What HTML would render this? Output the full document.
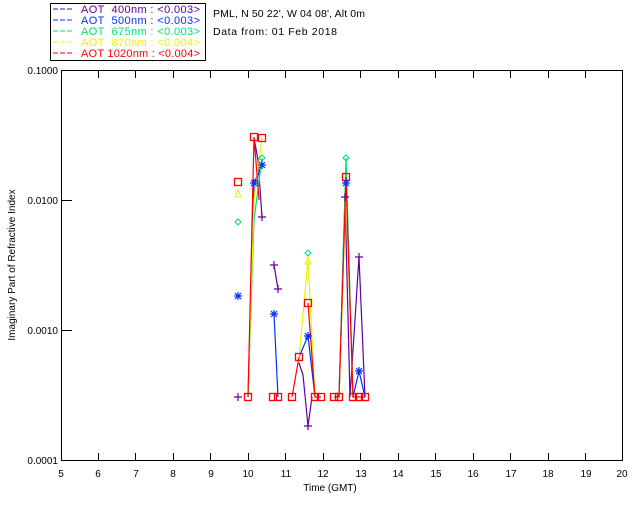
<!DOCTYPE html>
<html><head><style>
html,body{margin:0;padding:0;background:#fff;}
svg{display:block;font-family:"Liberation Sans",sans-serif;}
</style></head><body>
<svg width="640" height="512" viewBox="0 0 640 512" xmlns="http://www.w3.org/2000/svg">
<rect width="640" height="512" fill="#fff"/>
<rect x="50.5" y="3.5" width="155" height="57" fill="#fff" stroke="#000"/>
<g font-size="11">
<g stroke-width="1">
<line x1="53" y1="9" x2="73" y2="9" stroke="#6000a0" stroke-dasharray="5,2"/>
<line x1="53" y1="20" x2="73" y2="20" stroke="#0030ff" stroke-dasharray="5,2"/>
<line x1="53" y1="31" x2="73" y2="31" stroke="#00e070" stroke-dasharray="5,2"/>
<line x1="53" y1="42" x2="73" y2="42" stroke="#f0f000" stroke-dasharray="5,2"/>
<line x1="53" y1="53" x2="73" y2="53" stroke="#ff0000" stroke-dasharray="5,2"/>
</g>
<text x="81" y="13" fill="#6000a0" textLength="119" lengthAdjust="spacing" xml:space="preserve">AOT  400nm : &lt;0.003&gt;</text>
<text x="81" y="24" fill="#0030ff" textLength="119" lengthAdjust="spacing" xml:space="preserve">AOT  500nm : &lt;0.003&gt;</text>
<text x="81" y="35" fill="#00e070" textLength="119" lengthAdjust="spacing" xml:space="preserve">AOT  675nm : &lt;0.003&gt;</text>
<text x="81" y="46" fill="#f0f000" textLength="119" lengthAdjust="spacing" xml:space="preserve">AOT  870nm : &lt;0.004&gt;</text>
<text x="81" y="57" fill="#ff0000" textLength="119" lengthAdjust="spacing" xml:space="preserve">AOT 1020nm : &lt;0.004&gt;</text>
</g>
<g font-size="10.5">
<text x="213" y="17" fill="#000" textLength="152" lengthAdjust="spacing">PML, N 50 22', W 04 08', Alt 0m</text>
<text x="213" y="35" fill="#000" textLength="124" lengthAdjust="spacing">Data from: 01 Feb 2018</text>
</g>
<rect x="61.5" y="70.5" width="561" height="390" fill="none" stroke="#000"/>
<g stroke="#000">
<line x1="61" y1="200.5" x2="72" y2="200.5"/><line x1="61" y1="330.5" x2="72" y2="330.5"/>
<line x1="98.5" y1="71" x2="98.5" y2="78"/><line x1="98.5" y1="453" x2="98.5" y2="460"/>
<line x1="135.5" y1="71" x2="135.5" y2="78"/><line x1="135.5" y1="453" x2="135.5" y2="460"/>
<line x1="173.5" y1="71" x2="173.5" y2="78"/><line x1="173.5" y1="453" x2="173.5" y2="460"/>
<line x1="210.5" y1="71" x2="210.5" y2="78"/><line x1="210.5" y1="453" x2="210.5" y2="460"/>
<line x1="248.5" y1="71" x2="248.5" y2="78"/><line x1="248.5" y1="453" x2="248.5" y2="460"/>
<line x1="285.5" y1="71" x2="285.5" y2="78"/><line x1="285.5" y1="453" x2="285.5" y2="460"/>
<line x1="323.5" y1="71" x2="323.5" y2="78"/><line x1="323.5" y1="453" x2="323.5" y2="460"/>
<line x1="360.5" y1="71" x2="360.5" y2="78"/><line x1="360.5" y1="453" x2="360.5" y2="460"/>
<line x1="398.5" y1="71" x2="398.5" y2="78"/><line x1="398.5" y1="453" x2="398.5" y2="460"/>
<line x1="435.5" y1="71" x2="435.5" y2="78"/><line x1="435.5" y1="453" x2="435.5" y2="460"/>
<line x1="473.5" y1="71" x2="473.5" y2="78"/><line x1="473.5" y1="453" x2="473.5" y2="460"/>
<line x1="510.5" y1="71" x2="510.5" y2="78"/><line x1="510.5" y1="453" x2="510.5" y2="460"/>
<line x1="548.5" y1="71" x2="548.5" y2="78"/><line x1="548.5" y1="453" x2="548.5" y2="460"/>
<line x1="585.5" y1="71" x2="585.5" y2="78"/><line x1="585.5" y1="453" x2="585.5" y2="460"/>
</g>
<g font-size="10" fill="#000">
<text x="58" y="74" text-anchor="end">0.1000</text>
<text x="58" y="204" text-anchor="end">0.0100</text>
<text x="58" y="334" text-anchor="end">0.0010</text>
<text x="58" y="464" text-anchor="end">0.0001</text>
<g text-anchor="middle">
<text x="61" y="477">5</text><text x="98" y="477">6</text><text x="136" y="477">7</text><text x="173" y="477">8</text>
<text x="211" y="477">9</text><text x="248" y="477">10</text><text x="286" y="477">11</text><text x="323" y="477">12</text>
<text x="361" y="477">13</text><text x="398" y="477">14</text><text x="436" y="477">15</text><text x="473" y="477">16</text>
<text x="511" y="477">17</text><text x="548" y="477">18</text><text x="586" y="477">19</text><text x="622" y="477">20</text>
<text x="330" y="491">Time (GMT)</text>
</g>
<text transform="translate(15,265) rotate(-90)" text-anchor="middle">Imaginary Part of Refractive Index</text>
</g>
<g fill="none" stroke-width="1.2">
<polyline stroke="#6000a0" points="254,138 258,160 262,217"/>
<polyline stroke="#6000a0" points="274,265 278,289"/>
<polyline stroke="#6000a0" points="299,363 303,375 308,426 312,397"/>
<polyline stroke="#6000a0" points="339,397 345,197 350,397 359,257 365,397"/>
<polyline stroke="#0030ff" points="248,397 254,183 262,165"/>
<polyline stroke="#0030ff" points="274,314 278,397"/>
<polyline stroke="#0030ff" points="299,357 308,336 315,397"/>
<polyline stroke="#0030ff" points="339,397 346,183 353,397 359,371 365,397"/>
<polyline stroke="#00e070" points="248,397 254,220 262,158"/>
<polyline stroke="#00e070" points="339,397 346,158 353,397"/>
<polyline stroke="#f0f000" points="248,397 254,200 262,138"/>
<polyline stroke="#f0f000" points="299,357 308,260 315,397"/>
<polyline stroke="#f0f000" points="339,397 346,190 353,397"/>
<polyline stroke="#ff0000" points="248,397 254,137 259,200"/>
<polyline stroke="#ff0000" points="292,397 299,357"/>
<polyline stroke="#ff0000" points="308,303 315,397 321,397"/>
<polyline stroke="#ff0000" points="334,397 339,397 346,177 353,397 359,397 365,397"/>
</g>
<g fill="none" stroke="#ff0000" stroke-width="1.3">
<rect x="250.5" y="133.5" width="7" height="7"/><rect x="258.5" y="134.5" width="7" height="7"/>
<rect x="234.5" y="178.5" width="7" height="7"/><rect x="295.5" y="353.5" width="7" height="7"/>
<rect x="304.5" y="299.5" width="7" height="7"/><rect x="342.5" y="173.5" width="7" height="7"/>
<rect x="244.5" y="393.5" width="7" height="7"/><rect x="269.5" y="393.5" width="7" height="7"/>
<rect x="274.5" y="393.5" width="7" height="7"/><rect x="288.5" y="393.5" width="7" height="7"/>
<rect x="311.5" y="393.5" width="7" height="7"/><rect x="317.5" y="393.5" width="7" height="7"/>
<rect x="330.5" y="393.5" width="7" height="7"/><rect x="335.5" y="393.5" width="7" height="7"/>
<rect x="349.5" y="393.5" width="7" height="7"/><rect x="355.5" y="393.5" width="7" height="7"/>
<rect x="361.5" y="393.5" width="7" height="7"/>
</g>
<g fill="none" stroke="#f0f000"><path d="M235,197 L238,190 L241,197 Z"/><path d="M305,264 L308,257 L311,264 Z"/></g>
<g fill="none" stroke="#00e070"><path d="M238,219 l3,3 l-3,3 l-3,-3 Z"/><path d="M262,155 l3,3 l-3,3 l-3,-3 Z"/><path d="M308,250 l3,3 l-3,3 l-3,-3 Z"/><path d="M346,155 l3,3 l-3,3 l-3,-3 Z"/></g>
<g stroke="#0030ff" stroke-width="1.2" fill="none">
<path d="M234,296h8M238,292v8M235,293l6,6M241,293l-6,6"/>
<path d="M250,183h8M254,179v8M251,180l6,6M257,180l-6,6"/>
<path d="M258,165h8M262,161v8M259,162l6,6M265,162l-6,6"/>
<path d="M270,314h8M274,310v8M271,311l6,6M277,311l-6,6"/>
<path d="M304,336h8M308,332v8M305,333l6,6M311,333l-6,6"/>
<path d="M342,183h8M346,179v8M343,180l6,6M349,180l-6,6"/>
<path d="M355,371h8M359,367v8M356,368l6,6M362,368l-6,6"/>
</g>
<g stroke="#6000a0" stroke-width="1.2" fill="none">
<path d="M234,397h8M238,393v8"/><path d="M258,217h8M262,213v8"/><path d="M270,265h8M274,261v8"/>
<path d="M274,289h8M278,285v8"/><path d="M304,426h8M308,422v8"/><path d="M355,257h8M359,253v8"/>
<path d="M341,197h8M345,193v8"/>
</g>
</svg>
</body></html>
